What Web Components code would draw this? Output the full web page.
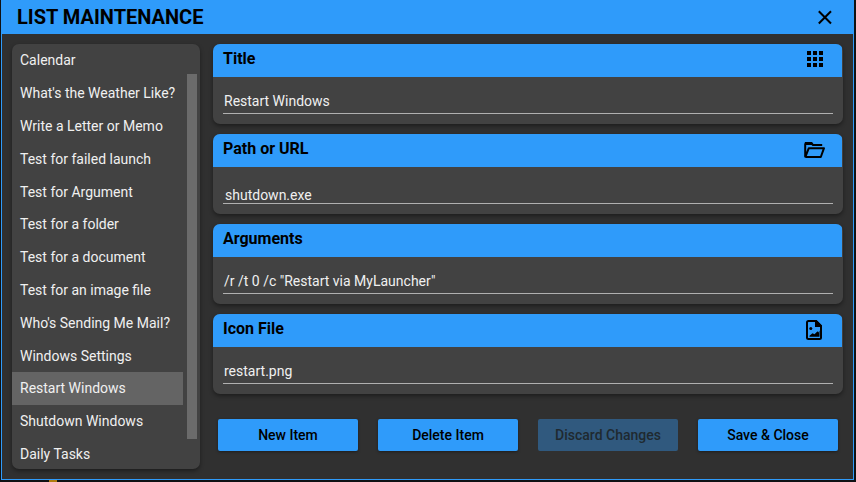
<!DOCTYPE html>
<html lang="en"><head><meta charset="utf-8"><title>List Maintenance</title>
<style>
html,body{margin:0;height:100%;overflow:hidden;background:#101214}
body{font-family:Roboto,"Liberation Sans",sans-serif;background:linear-gradient(#b07c10,#b07c10) 49px 100%/8px 2px no-repeat,#101214}
</style></head><body>
<list-maintenance></list-maintenance>
<script>
const define=(name,html)=>customElements.define(name,class extends HTMLElement{
  constructor(){super();const t=document.createElement('template');t.innerHTML=html;
    this.attachShadow({mode:'open'}).append(t.content.cloneNode(true));}
});
define('side-item',`<style>
:host{display:flex;align-items:center;box-sizing:border-box;height:32.8px;width:171px;padding-left:8px;color:#f0f0f0;font-size:14px;line-height:16px;white-space:nowrap}
:host([selected]){background:#646464}
</style><span><slot></slot></span>`);
define('side-list',`<style>
:host{display:flex;box-sizing:border-box;width:188px;height:425px;background:#424242;border-radius:7px;overflow:hidden;box-shadow:0 2px 4px rgba(0,0,0,.4)}
.items{width:175px}
.bar{width:10px;height:365px;margin-top:30px;background:#6b6b6b}
</style><div class="items"><slot></slot></div><div class="bar"></div>`);
define('field-card',`<style>
:host{display:flex;flex-direction:column;box-sizing:border-box;height:80px;background:#424242;border-radius:7px;overflow:hidden;box-shadow:0 2px 4px rgba(0,0,0,.4)}
header{display:flex;justify-content:space-between;box-sizing:border-box;height:33px;margin-right:1px;padding:0 16px 0 10px;background:#2f9bfa;color:#000;font-size:16px;font-weight:700;line-height:30px}
.value{display:flex;align-items:flex-end;box-sizing:border-box;height:37px;margin:0 10px;padding:0 0 var(--drop,4px) var(--indent,1px);border-bottom:1px solid #b0b0b0;color:#f0f0f0;font-size:14px;line-height:16px;white-space:pre}
</style><header><slot name="title"></slot><slot name="icon"></slot></header><div class="value"><span><slot></slot></span></div>`);
define('action-button',`<style>
:host{display:flex;align-items:center;justify-content:center;width:140px;height:32px;border-radius:2px;background:#2f9bfa;color:#000;font-size:14px;font-weight:500;white-space:nowrap;box-shadow:0 1px 3px rgba(0,0,0,.4)}
:host([disabled]){background:#30597e;color:#1f2930;box-shadow:none}
</style><span><slot></slot></span>`);
define('list-maintenance',`<style>
:host{display:block;padding-left:1px}
.window{box-sizing:border-box;width:853px;height:480px;border:1px solid #2f9bfa;border-top:0;background:#303030}
.top{display:flex;align-items:center;justify-content:space-between;box-sizing:border-box;height:34px;padding:0 20px 0 15px;background:#2f9bfa;color:#000;font-size:20px;font-weight:700}
.body{display:flex;gap:13px;padding:10px 10px 0 10px}
.right{width:630px}
.cards{display:grid;gap:10px}
.actions{display:flex;gap:20px;padding:25px 0 0 5px}
svg{display:block}
</style><div class="window">
<div class="top"><span>LIST MAINTENANCE</span><svg width="16" height="16" viewBox="0 0 16 16"><path d="M1.8 2.3 14 14.5M14 2.3 1.8 14.5" stroke="#000" stroke-width="2"/></svg></div>
<div class="body"><side-list>
<side-item>Calendar</side-item><side-item>What's the Weather Like?</side-item><side-item>Write a Letter or Memo</side-item><side-item>Test for failed launch</side-item><side-item>Test for Argument</side-item><side-item>Test for a folder</side-item><side-item>Test for a document</side-item><side-item>Test for an image file</side-item><side-item>Who's Sending Me Mail?</side-item><side-item>Windows Settings</side-item><side-item selected>Restart Windows</side-item><side-item>Shutdown Windows</side-item><side-item>Daily Tasks</side-item>
</side-list><div class="right"><div class="cards">
<field-card><span slot="title">Title</span><svg slot="icon" width="22" height="30" viewBox="0 0 22 30"><path d="M3 7h4v4H3zM9 7h4v4H9zM15 7h4v4h-4zM3 13h4v4H3zM9 13h4v4H9zM15 13h4v4h-4zM3 19h4v4H3zM9 19h4v4H9zM15 19h4v4h-4z"/></svg>Restart Windows</field-card>
<field-card style="--drop:0px;--indent:2px"><span slot="title">Path or URL</span><svg slot="icon" width="22" height="30" viewBox="0 0 22 30"><path d="M1.2 22.8V10.2Q1.2 9 2.4 9H7l2 2h9.2M1.4 22.8 4.8 14.2H20L16.8 23H2.2Q1 23 1 21.8" fill="none" stroke="#000" stroke-width="2" stroke-linejoin="round"/><path d="M1 8h7l2 3H1z"/></svg>shutdown.exe</field-card>
<field-card><span slot="title">Arguments</span>/r /t 0 /c "Restart via MyLauncher"</field-card>
<field-card><span slot="title">Icon File</span><svg slot="icon" width="22" height="30" viewBox="0 0 22 30"><path d="M4.5 7H12l5 5v11.5q0 1.5-1.5 1.5h-11Q3 25 3 23.5v-15Q3 7 4.5 7z" fill="none" stroke="#000" stroke-width="2" stroke-linejoin="round"/><path d="M11 6h1.5L18 11.5V13h-7zM5.5 22.7v-1l3-2.4 2 1 3-3 .8 1.2 1.2-2v6.2z"/><circle cx="6.8" cy="14.6" r="1.5"/></svg>restart.png</field-card>
</div><div class="actions"><action-button>New Item</action-button><action-button>Delete Item</action-button><action-button disabled>Discard Changes</action-button><action-button>Save &amp; Close</action-button></div></div></div></div>`);
</script></body></html>
